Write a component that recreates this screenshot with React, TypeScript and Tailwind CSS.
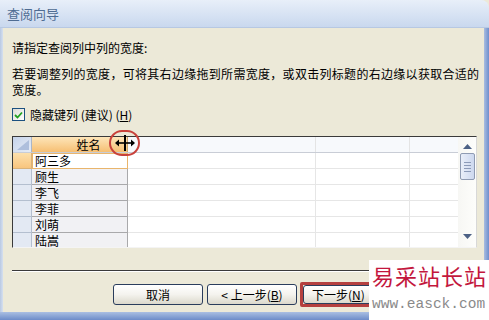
import React from "react";

const rows = ["阿三多", "顾生", "李飞", "李菲", "刘萌", "陆嵩"];

function XpButton({ children, className = "" }: { children: React.ReactNode; className?: string }) {
    return (
        <div
            className={
                "w-[90px] h-[21px] rounded-[3px] border border-[#2a3d5c] bg-gradient-to-b from-white via-[#f4f3ee] to-[#dcd9cc] flex items-center justify-center text-[12px] text-black " +
                className
            }
        >
            {children}
        </div>
    );
}

function ScrollArrow({ up }: { up?: boolean }) {
    return (
        <svg width="9" height="5" viewBox="0 0 9 5">
            <path d={up ? "M0 5 L4.5 0 L9 5 Z" : "M0 0 L4.5 5 L9 0 Z"} fill="#4d6185" />
        </svg>
    );
}

export default function App() {
    return (
        <div
            className="w-[489px] h-[320px] relative overflow-hidden bg-[#ece9d8] flex flex-col"
            style={{ fontFamily: '"Noto Sans CJK SC", "Noto Sans", sans-serif' }}
        >
            {/* Title bar */}
            <div className="h-[28px] shrink-0 bg-gradient-to-b from-[#e8eff9] to-[#c9d8ee] border-b border-[#b7c8e2] rounded-tr-[8px] flex items-center pl-[7px]">
                <span className="text-[13px] text-[#4f6c92] leading-none">查阅向导</span>
            </div>

            <div className="flex flex-1">
                <div className="w-[3px] bg-gradient-to-r from-[#b9c9e3] to-[#d6e0ef]" />

                <div className="flex-1 flex flex-col pl-[9px] text-[12px] text-black leading-[15px]">
                    <p className="pt-[12px]">请指定查阅列中列的宽度:</p>
                    <div className="mt-[11px] tracking-[0.3px] whitespace-nowrap leading-[16px]">
                        <p>若要调整列的宽度，可将其右边缘拖到所需宽度，或双击列标题的右边缘以获取合适的</p>
                        <p>宽度。</p>
                    </div>

                    <div className="mt-[9px] h-[15px] flex items-center gap-[5px]">
                        <div className="w-[13px] h-[13px] border border-[#1c5180] bg-gradient-to-br from-[#dcdcd6] to-white flex items-center justify-center">
                            <svg width="9" height="8" viewBox="0 0 9 8">
                                <path d="M1 4 L3.5 6.5 L8 1.5" stroke="#21a121" strokeWidth="1.8" fill="none" />
                            </svg>
                        </div>
                        <span>
                            隐藏键列 (建议) (<span className="underline">H</span>)
                        </span>
                    </div>

                    {/* Data sheet */}
                    <div className="mt-[14px] w-[465px] h-[112px] border-t border-l border-[#3a3a3a] border-r border-r-[#d8d8d8] border-b border-b-[#f4f4f4] bg-white flex overflow-hidden">
                        <div className="flex-1 flex flex-col">
                            {/* header */}
                            <div className="h-[16px] shrink-0 flex border-b border-[#c9cdd6] bg-[#f7f9fc]">
                                <div className="w-[19px] border-r border-[#aab6c8] bg-gradient-to-br from-[#c6d4ea] to-[#e6ecf6] relative overflow-hidden">
                                    <svg width="19" height="16" viewBox="0 0 19 16" className="absolute inset-0">
                                        <path d="M16 3 L16 13 L4 13 Z" fill="#aebfdc" />
                                    </svg>
                                </div>
                                <div className="w-[96px] border-r border-[#c8a26a] bg-gradient-to-b from-[#fde5b8] to-[#f6bf72] flex items-center justify-center text-[12px] leading-none pl-[18px]">
                                    姓名
                                </div>
                                <div className="w-[188px] border-r border-[#e4e4e4]" />
                                <div className="w-[94px] border-r border-[#e4e4e4]" />
                                <div className="flex-1" />
                            </div>
                            {rows.map((name, i) => (
                                <div key={name} className="h-[16px] shrink-0 flex">
                                    <div
                                        className={
                                            i === 0
                                                ? "w-[19px] border-r border-b border-[#d9b27a] bg-gradient-to-b from-[#fde0ab] to-[#f8c57e]"
                                                : "w-[19px] border-r border-b border-[#b4bfcf] bg-[#e3e9f3]"
                                        }
                                    />
                                    <div
                                        className={
                                            i === 0
                                                ? "w-[96px] border border-[#e9b56c] bg-white pl-[2px] text-[12px] leading-[14px]"
                                                : "w-[96px] border-r border-b border-[#a9a9ab] bg-[#f1f1f4] pl-[3px] text-[12px] leading-[15px]"
                                        }
                                    >
                                        {name}
                                    </div>
                                    <div className="w-[188px] border-r border-b border-[#e6e6e6]" />
                                    <div className="w-[94px] border-r border-b border-[#e6e6e6]" />
                                    <div className="flex-1 border-b border-[#e6e6e6]" />
                                </div>
                            ))}
                        </div>

                        {/* scrollbar */}
                        <div className="w-[18px] shrink-0 bg-gradient-to-r from-[#f7f7f4] to-[#fdfdfb] flex flex-col items-center pt-[7px]">
                            <ScrollArrow up />
                            <div className="mt-[4px] w-[15px] h-[27px] rounded-[2px] border border-[#8f9bb3] bg-gradient-to-r from-[#e9eef9] to-[#cdd8ef] flex flex-col items-center justify-center gap-[2px]">
                                <div className="w-[7px] h-px bg-[#8c9ab8]" />
                                <div className="w-[7px] h-px bg-[#8c9ab8]" />
                                <div className="w-[7px] h-px bg-[#8c9ab8]" />
                                <div className="w-[7px] h-px bg-[#8c9ab8]" />
                            </div>
                            <div className="flex-1" />
                            <div className="mb-[8px]">
                                <ScrollArrow />
                            </div>
                        </div>
                    </div>

                    <div className="mt-[22px] w-[465px] h-[2px] border-t border-[#3a3a3a] border-b border-b-white" />

                    <div className="mt-[10px] flex items-center pl-[101px] gap-[4px]">
                        <XpButton>取消</XpButton>
                        <XpButton>
                            &lt; 上一步(<span className="underline">B</span>)
                        </XpButton>
                        <div className="w-[80px] h-[25px] border-[3px] border-[#b5403f] rounded-[2px] -ml-[1px]">
                            <XpButton className="w-full h-full rounded-[1px] !justify-start pl-[8px]">
                                下一步(<span className="underline">N</span>)
                            </XpButton>
                        </div>
                    </div>
                </div>

                <div className="w-[5px] bg-gradient-to-r from-[#a9bde0] to-[#6f8fcc]" />
            </div>

            <div className="h-[8px] shrink-0 bg-gradient-to-b from-[#aabfe2] to-[#6d8cc9]" />

            {/* Red annotation circle with resize cursor */}
            <div className="absolute left-[109px] top-[130px] w-[31px] h-[26px] rounded-full border-2 border-[#c8413b] flex items-center justify-center">
                <svg width="20" height="16" viewBox="0 0 20 16">
                    <path d="M10 0 V16" stroke="#000" strokeWidth="2" />
                    <path d="M1 8 H19" stroke="#000" strokeWidth="1.6" />
                    <path d="M0 8 L4 4.5 L4 11.5 Z" fill="#000" />
                    <path d="M20 8 L16 4.5 L16 11.5 Z" fill="#000" />
                </svg>
            </div>

            {/* Watermark */}
            <div className="absolute left-[369px] top-[260px] w-[120px] h-[60px] bg-white flex flex-col pl-[3px] pt-[1px]">
                <span className="text-[22px] leading-[28px] text-[#c3173d] tracking-[1px]" style={{ fontFamily: '"Noto Sans CJK SC", serif' }}>
                    易采站长站
                </span>
                <span className="text-[14.5px] leading-[18px] mt-[6px] text-[#8a8a8a]" style={{ fontFamily: '"Liberation Mono", monospace' }}>
                    www.easck.com
                </span>
            </div>
        </div>
    );
}
